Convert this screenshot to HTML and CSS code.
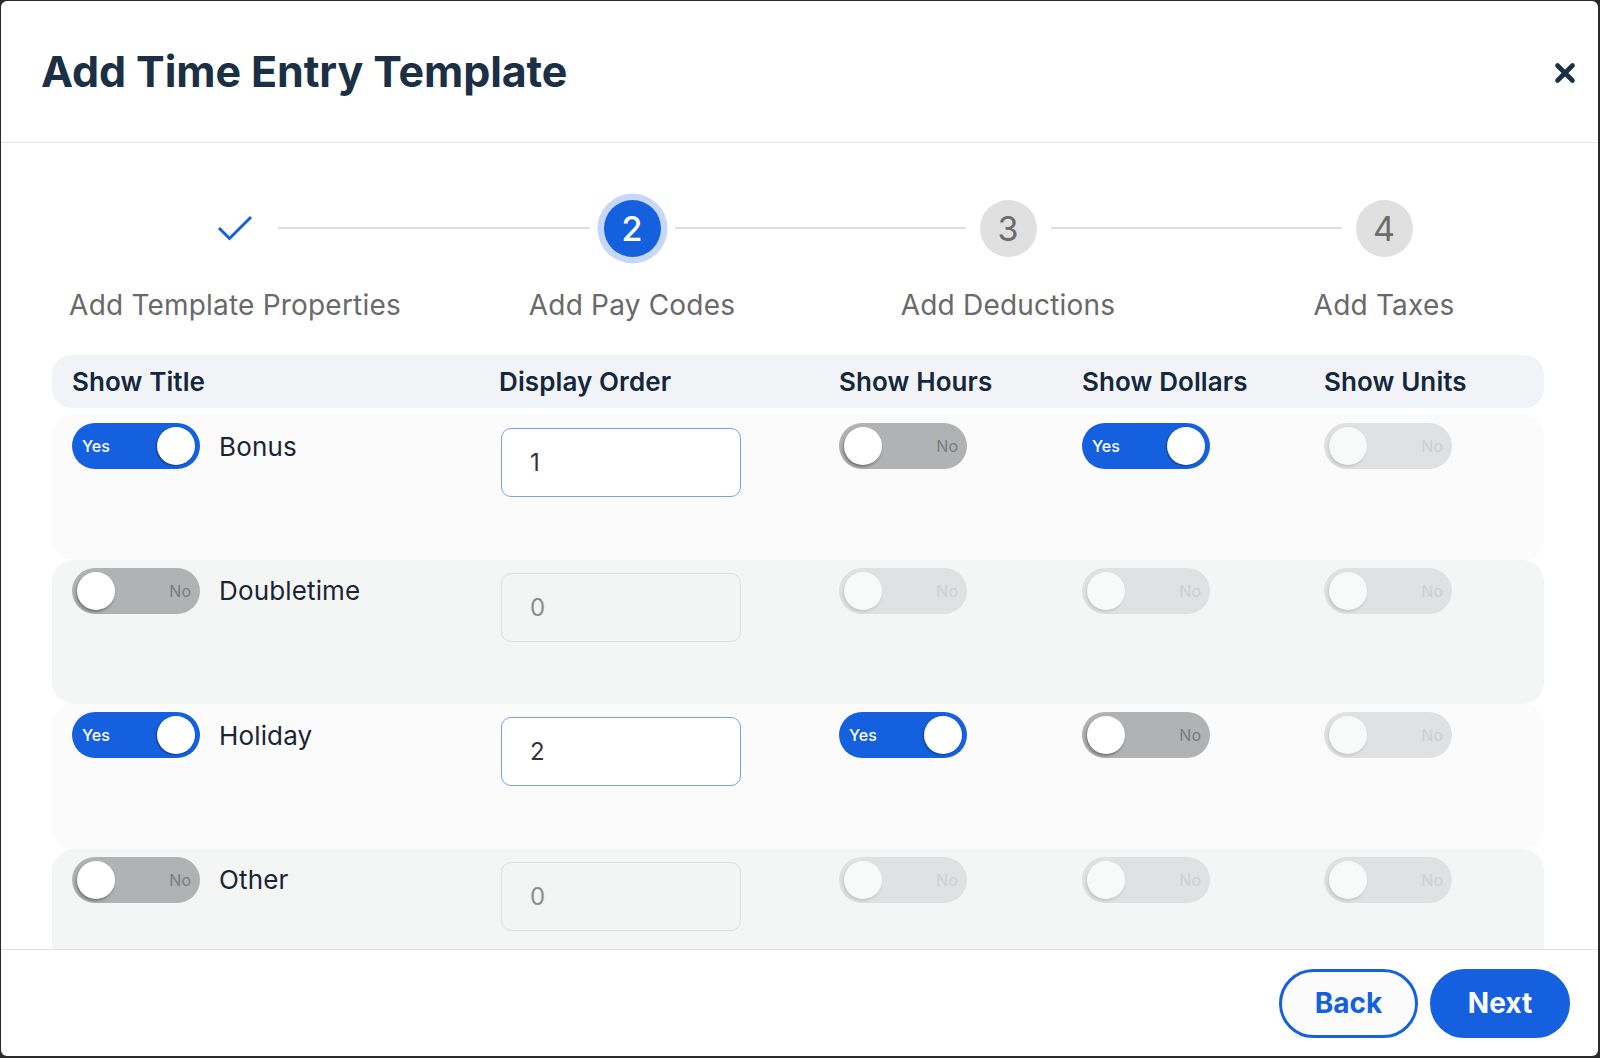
FILE: index.html
```html
<!DOCTYPE html>
<html lang="en">
<head>
<meta charset="utf-8">
<title>Add Time Entry Template</title>
<link rel="stylesheet" href="styles.css">
</head>
<body>
<div class="dialog">
  <header class="dlg-head">
    <h1 class="title">Add Time Entry Template</h1>
    <button class="close" aria-label="Close">
      <svg viewBox="0 0 24 24" width="24" height="24"><path d="M4.5 4.5L19.5 19.5M19.5 4.5L4.5 19.5" stroke="#1b2f45" stroke-width="4.6" stroke-linecap="round"/></svg>
    </button>
  </header>

  <main class="dlg-body">
    <div class="stepper">
      <div class="step-icon done">
        <svg viewBox="0 0 36 27" width="36" height="27"><polyline points="2,13 12.5,23.5 34,2" fill="none" stroke="#1560df" stroke-width="3"/></svg>
      </div>
      <div class="connector"></div>
      <div class="step-icon active"><span class="circle">2</span></div>
      <div class="connector"></div>
      <div class="step-icon"><span class="circle">3</span></div>
      <div class="connector"></div>
      <div class="step-icon"><span class="circle">4</span></div>

      <div class="step-label c1"><span>Add Template Properties</span></div>
      <div class="step-label c3"><span>Add Pay Codes</span></div>
      <div class="step-label c5"><span>Add Deductions</span></div>
      <div class="step-label c7"><span>Add Taxes</span></div>
    </div>

    <div class="table">
      <div class="thead cols">
        <div>Show Title</div>
        <div>Display Order</div>
        <div>Show Hours</div>
        <div>Show Dollars</div>
        <div>Show Units</div>
      </div>

      <div class="trow cols light">
        <div class="title-cell">
          <span class="toggle on"><span class="tt">Yes</span><span class="knob"></span></span>
          <span class="name">Bonus</span>
        </div>
        <div><input class="num" type="text" value="1" readonly></div>
        <div><span class="toggle off"><span class="tt">No</span><span class="knob"></span></span></div>
        <div><span class="toggle on"><span class="tt">Yes</span><span class="knob"></span></span></div>
        <div><span class="toggle dis"><span class="tt">No</span><span class="knob"></span></span></div>
      </div>

      <div class="trow cols shade">
        <div class="title-cell">
          <span class="toggle off"><span class="tt">No</span><span class="knob"></span></span>
          <span class="name">Doubletime</span>
        </div>
        <div><input class="num" type="text" value="0" disabled></div>
        <div><span class="toggle dis"><span class="tt">No</span><span class="knob"></span></span></div>
        <div><span class="toggle dis"><span class="tt">No</span><span class="knob"></span></span></div>
        <div><span class="toggle dis"><span class="tt">No</span><span class="knob"></span></span></div>
      </div>

      <div class="trow cols light">
        <div class="title-cell">
          <span class="toggle on"><span class="tt">Yes</span><span class="knob"></span></span>
          <span class="name">Holiday</span>
        </div>
        <div><input class="num" type="text" value="2" readonly></div>
        <div><span class="toggle on"><span class="tt">Yes</span><span class="knob"></span></span></div>
        <div><span class="toggle off"><span class="tt">No</span><span class="knob"></span></span></div>
        <div><span class="toggle dis"><span class="tt">No</span><span class="knob"></span></span></div>
      </div>

      <div class="trow cols shade">
        <div class="title-cell">
          <span class="toggle off"><span class="tt">No</span><span class="knob"></span></span>
          <span class="name">Other</span>
        </div>
        <div><input class="num" type="text" value="0" disabled></div>
        <div><span class="toggle dis"><span class="tt">No</span><span class="knob"></span></span></div>
        <div><span class="toggle dis"><span class="tt">No</span><span class="knob"></span></span></div>
        <div><span class="toggle dis"><span class="tt">No</span><span class="knob"></span></span></div>
      </div>
    </div>
  </main>

  <footer class="dlg-foot">
    <button class="btn back">Back</button>
    <button class="btn next">Next</button>
  </footer>
</div>
</body>
</html>
```

FILE: styles.css
```css
* { box-sizing: border-box; }

html, body {
  margin: 0;
  padding: 0;
  height: 100%;
}

body {
  background: #2a2a2a;
  font-family: Inter, "Noto Sans", "Liberation Sans", sans-serif;
  overflow: hidden;
}

.dialog {
  margin: 1px 2px 2px 1px;
  width: 1597px;
  height: 1055px;
  background: #ffffff;
  border-radius: 6px;
  display: flex;
  flex-direction: column;
  overflow: hidden;
}

/* header */
.dlg-head {
  height: 142px;
  flex: 0 0 142px;
  border-bottom: 1px solid #e2e2e2;
  display: flex;
  align-items: center;
  justify-content: space-between;
  padding: 0 21px 0 40px;
}

.title {
  margin: 0 0 2px 0;
  font-size: 43px;
  font-weight: 700;
  color: #1b2f45;
  letter-spacing: -0.1px;
}

.close {
  border: 0;
  background: none;
  padding: 0;
  width: 24px;
  height: 24px;
  display: flex;
  margin-top: 2px;
}

/* body */
.dlg-body {
  flex: 1;
  overflow: hidden;
  padding-top: 50px;
}

.stepper {
  display: grid;
  grid-template-columns: 57px 340px 57px 319px 57px 319px 57px;
  grid-template-rows: 70px 34px;
  row-gap: 25px;
  margin-left: 205.5px;
  align-items: center;
}

.step-icon {
  width: 57px;
  height: 70px;
  display: flex;
  align-items: center;
  justify-content: center;
}

.step-icon .circle {
  width: 57px;
  height: 57px;
  border-radius: 50%;
  background: #e0e0e0;
  color: #6c6c6c;
  font-size: 34px;
  display: flex;
  align-items: center;
  justify-content: center;
}

.step-icon.active .circle {
  background: #1560df;
  color: #ffffff;
  font-weight: 500;
  box-shadow: 0 0 0 6.5px #c7d7f6;
}

.connector {
  height: 2px;
  background: #dddddd;
  margin: 0 14px;
}

.step-label {
  grid-row: 2;
  display: flex;
  justify-content: center;
  white-space: nowrap;
  font-size: 28px;
  line-height: 34px;
  color: #696969;
  letter-spacing: 0.2px;
}
.step-label.c1 { grid-column: 1; }
.step-label.c3 { grid-column: 3; }
.step-label.c5 { grid-column: 5; }
.step-label.c7 { grid-column: 7; }

/* table */
.table {
  margin: 33px 54px 0 51px;
  display: flex;
  flex-direction: column;
}

.cols {
  display: grid;
  grid-template-columns: 427px 340px 243px 242px 1fr;
  padding: 0 20px;
}

.thead {
  height: 53px;
  align-items: center;
  background: #f1f3f6;
  border-radius: 20px;
  font-size: 26px;
  font-weight: 600;
  color: #14283d;
  letter-spacing: 0.1px;
  margin-bottom: 7px;
}

.trow {
  height: 144.5px;
  border-radius: 22px;
  align-items: start;
  padding-top: 8px;
}
.trow.light { background: #fbfbfb; }
.trow.shade { background: #f4f5f5; }

.title-cell {
  display: flex;
  align-items: center;
  gap: 19px;
}

.name {
  font-size: 26px;
  color: #1a2435;
  letter-spacing: 0.15px;
}

.num {
  display: block;
  margin: 5px 0 0 2px;
  width: 240px;
  height: 69px;
  border-radius: 10px;
  border: 1.5px solid #79a0ea;
  background: #ffffff;
  padding: 0 0 0 28px;
  font-family: Inter, "Noto Sans", "Liberation Sans", sans-serif;
  font-size: 24px;
  color: #333333;
  outline: none;
}
.num:disabled {
  background: #f3f4f4;
  border-color: #dedfdf;
  color: #8c8c8c;
}

/* toggle */
.toggle {
  position: relative;
  display: block;
  flex: 0 0 auto;
  width: 128px;
  height: 46px;
  border-radius: 23px;
  font-size: 16px;
  font-weight: 500;
}
.toggle .knob {
  position: absolute;
  top: 4px;
  width: 38px;
  height: 38px;
  border-radius: 50%;
  background: #ffffff;
}
.toggle .tt {
  position: absolute;
  top: 0;
  line-height: 46px;
}

.toggle.on { background: #1560df; }
.toggle.on .knob {
  right: 5px;
  box-shadow: -1px 1px 2px rgba(0, 0, 0, 0.35);
}
.toggle.on .tt { left: 10px; color: #ffffff; }

.toggle.off { background: #b0b2b3; }
.toggle.off .knob {
  left: 5px;
  box-shadow: -1px 2px 3px rgba(0, 0, 0, 0.35);
}
.toggle.off .tt { right: 9px; color: #7b7d7e; font-weight: 400; }

.toggle.dis { background: #e0e1e2; }
.toggle.dis .knob {
  left: 5px;
  background: #f8f9f9;
  box-shadow: -1px 2px 3px rgba(0, 0, 0, 0.12);
}
.toggle.dis .tt { right: 9px; color: #cfd0d1; font-weight: 400; }

/* footer */
.dlg-foot {
  flex: 0 0 107px;
  border-top: 1px solid #e2e2e2;
  display: flex;
  align-items: center;
  justify-content: flex-end;
  gap: 12px;
  padding-right: 28px;
}

.btn {
  width: 139px;
  height: 69px;
  border-radius: 35px;
  border: 3px solid #1560df;
  font-family: Inter, "Noto Sans", "Liberation Sans", sans-serif;
  font-size: 28px;
  font-weight: 700;
}
.btn.back { background: #fbfbfb; color: #1560df; }
.btn.next { background: #1560df; color: #ffffff; width: 140px; }
```
